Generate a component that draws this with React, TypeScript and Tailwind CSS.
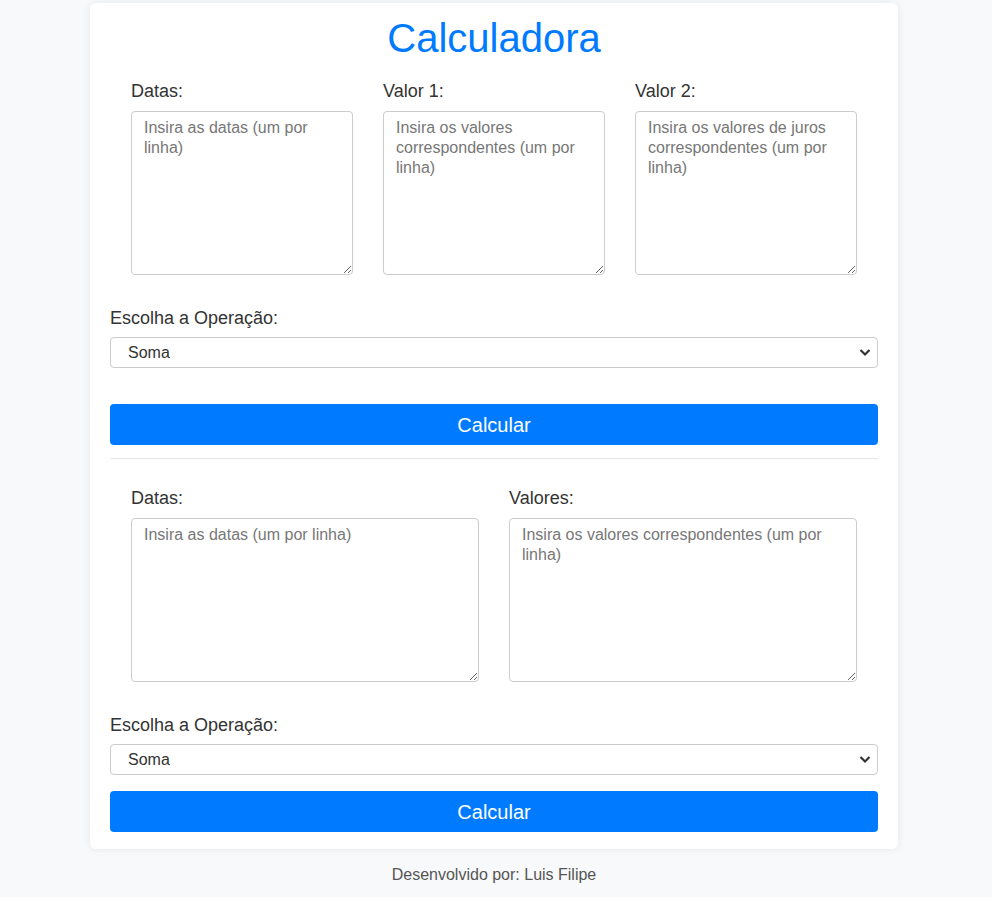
import React from "react";

const font = { fontFamily: '"Liberation Sans", Arial, sans-serif' };

function Field({ label, placeholder }: { label: string; placeholder: string }) {
  return (
    <div className="flex-1 flex flex-col">
      <label className="text-[18px] leading-[21px] text-[#333] mb-[9px]">{label}</label>
      <textarea
        placeholder={placeholder}
        className="h-[164px] w-full border border-[#ccc] rounded-[4px] bg-white pt-[6px] px-[12px] text-[16px] leading-[20px] text-[#333] placeholder:text-[#777] outline-none"
      />
    </div>
  );
}

function Select() {
  return (
    <div className="relative">
      <select className="appearance-none w-full h-[31px] border border-[#ccc] rounded-[4px] bg-white pl-[17px] text-[16px] text-[#333] outline-none">
        <option>Soma</option>
        <option>Subtração</option>
      </select>
      <svg
        className="absolute right-[7px] top-[11px] pointer-events-none"
        width="12"
        height="9"
        viewBox="0 0 12 9"
      >
        <path d="M1.5 2 L6 6.5 L10.5 2" fill="none" stroke="#333" strokeWidth="2.2" />
      </svg>
    </div>
  );
}

export default function App() {
  return (
    <div className="min-h-screen bg-[#f8f9fa] flex flex-col items-start" style={font}>
      <div className="ml-[90px] w-[808px]">
        <div className="mt-[3px] bg-white rounded-[6px] shadow-[0_0_8px_rgba(0,0,0,0.08)] px-[20px] pt-[12px] pb-[17px]">
          <h1 className="text-[40px] leading-[46px] text-center text-[#007bff]">Calculadora</h1>
          <div className="flex gap-[30px] px-[21px] mt-[20px]">
            <Field label="Datas:" placeholder="Insira as datas (um por linha)" />
            <Field label="Valor 1:" placeholder="Insira os valores correspondentes (um por linha)" />
            <Field label="Valor 2:" placeholder="Insira os valores de juros correspondentes (um por linha)" />
          </div>
          <label className="block mt-[33px] text-[18px] leading-[21px] text-[#333] mb-[8px]">Escolha a Operação:</label>
          <Select />
          <button className="mt-[36px] w-full h-[41px] rounded-[4px] bg-[#007bff] text-white text-[20px]">Calcular</button>
          <div className="mt-[13px] border-t border-[#e5e5e5]" />
          <div className="flex gap-[30px] px-[21px] mt-[29px]">
            <Field label="Datas:" placeholder="Insira as datas (um por linha)" />
            <Field label="Valores:" placeholder="Insira os valores correspondentes (um por linha)" />
          </div>
          <label className="block mt-[33px] text-[18px] leading-[21px] text-[#333] mb-[8px]">Escolha a Operação:</label>
          <Select />
          <button className="mt-[16px] w-full h-[41px] rounded-[4px] bg-[#007bff] text-white text-[20px]">Calcular</button>
        </div>
        <p className="mt-[17px] text-center text-[16px] leading-[18px] text-[#555]">Desenvolvido por: Luis Filipe</p>
      </div>
    </div>
  );
}
